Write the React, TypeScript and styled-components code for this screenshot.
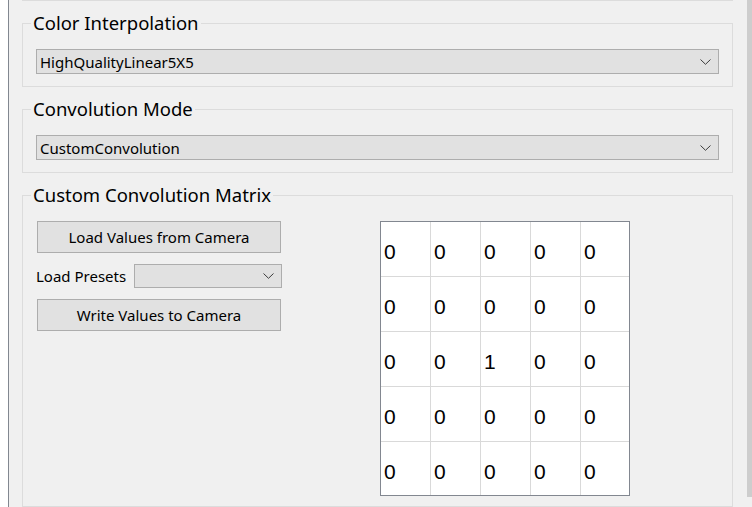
import React from 'react'
import styled, { createGlobalStyle } from 'styled-components'

const GlobalStyle = createGlobalStyle`
  html, body {
    margin: 0;
    padding: 0;
    background: #ffffff;
    overflow: hidden;
  }
`

const uiFont = `"Segoe UI", "Noto Sans", "Open Sans", sans-serif`

const Window = styled.div`
  display: flex;
  height: 507px;
  padding-left: 8px;
  background: #ffffff;
`

const Panel = styled.div`
  flex: 1;
  display: flex;
  flex-direction: column;
  background: #f0f0f0;
  border-left: 1px solid #828790;
  padding: 0 14px 0 13px;
  overflow: hidden;
  font-family: ${uiFont};
  color: #000;
`

const ScrollTrack = styled.div`
  width: 5px;
  display: flex;
  flex-direction: column;
  background: #f0f0f0;
`

const ScrollThumb = styled.div`
  height: 497px;
  background: #cdcdcd;
`

const GroupTail = styled.div`
  height: 0;
  border-bottom: 1px solid #dcdcdc;
`

const Group = styled.fieldset<{ $grow?: boolean }>`
  margin: 9px 0 0;
  padding: 13px 13px 12px;
  border: 1px solid #dcdcdc;
  min-width: 0;
  ${(p) => (p.$grow ? 'flex: 1; padding-bottom: 0;' : '')}
`

const Legend = styled.legend`
  font-size: 18.5px;
  line-height: 26px;
  padding: 0 2px;
  margin-left: -5px;
`

const ComboBox = styled.div<{ $w?: number; $h?: number }>`
  display: flex;
  align-items: center;
  box-sizing: border-box;
  width: ${(p) => (p.$w ? `${p.$w}px` : '100%')};
  height: ${(p) => p.$h || 25}px;
  background: #e1e1e1;
  border: 1px solid #adadad;
  padding: 0 7px 0 3px;
  font-size: 15px;
`

const ComboText = styled.span`
  flex: 1;
  white-space: nowrap;
`

const Chevron = () => (
  <svg width="11" height="6" viewBox="0 0 11 6">
    <polyline points="0.5,0.5 5.5,5.3 10.5,0.5" fill="none" stroke="#3c3c3c" strokeWidth="1" />
  </svg>
)

const MatrixBody = styled.div`
  display: flex;
  align-items: flex-start;
`

const Controls = styled.div`
  width: 246px;
  display: flex;
  flex-direction: column;
  gap: 11px;
`

const Button = styled.button`
  box-sizing: border-box;
  margin-left: 1px;
  width: 244px;
  height: 32px;
  background: #e1e1e1;
  border: 1px solid #adadad;
  font-family: ${uiFont};
  font-size: 15px;
  color: #000;
  padding: 0;
`

const PresetRow = styled.div`
  display: flex;
  align-items: center;
  justify-content: space-between;
  font-size: 15px;
`

const Matrix = styled.div`
  margin-left: 98px;
  width: 250px;
  height: 275px;
  box-sizing: border-box;
  border: 1px solid #828790;
  background: #ffffff;
  display: grid;
  grid-template-columns: repeat(5, 50px);
  grid-auto-rows: 55px;
  overflow: hidden;
  font-family: "Liberation Sans", Arial, sans-serif;
  font-size: 21px;
`

const Cell = styled.div<{ $last: boolean }>`
  display: flex;
  align-items: center;
  padding: 5px 0 0 3px;
  border-right: ${(p) => (p.$last ? 'none' : '1px solid #d9d9d9')};
  border-bottom: 1px solid #d9d9d9;
`

const matrix = [
  [0, 0, 0, 0, 0],
  [0, 0, 0, 0, 0],
  [0, 0, 1, 0, 0],
  [0, 0, 0, 0, 0],
  [0, 0, 0, 0, 0],
]

const App = () => {
  return (
    <>
      <GlobalStyle />
      <Window>
        <Panel>
          <GroupTail />
          <Group>
            <Legend>Color Interpolation</Legend>
            <ComboBox>
              <ComboText>HighQualityLinear5X5</ComboText>
              <Chevron />
            </ComboBox>
          </Group>
          <Group>
            <Legend>Convolution Mode</Legend>
            <ComboBox>
              <ComboText>CustomConvolution</ComboText>
              <Chevron />
            </ComboBox>
          </Group>
          <Group $grow>
            <Legend>Custom Convolution Matrix</Legend>
            <MatrixBody>
              <Controls>
                <Button>Load Values from Camera</Button>
                <PresetRow>
                  <span>Load Presets</span>
                  <ComboBox $w={148} $h={24}>
                    <ComboText />
                    <Chevron />
                  </ComboBox>
                </PresetRow>
                <Button>Write Values to Camera</Button>
              </Controls>
              <Matrix>
                {matrix.map((row, r) =>
                  row.map((v, c) => (
                    <Cell key={`${r}-${c}`} $last={c === 4}>
                      {v}
                    </Cell>
                  ))
                )}
              </Matrix>
            </MatrixBody>
          </Group>
        </Panel>
        <ScrollTrack>
          <ScrollThumb />
        </ScrollTrack>
      </Window>
    </>
  )
}

export default App
